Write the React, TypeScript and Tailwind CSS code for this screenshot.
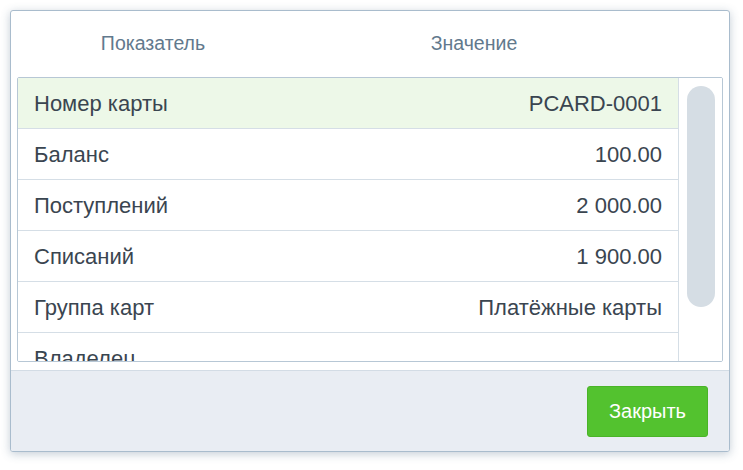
const rows = [
  { label: 'Номер карты', value: 'PCARD-0001', active: true },
  { label: 'Баланс', value: '100.00' },
  { label: 'Поступлений', value: '2 000.00' },
  { label: 'Списаний', value: '1 900.00' },
  { label: 'Группа карт', value: 'Платёжные карты' },
  { label: 'Владелец', value: '' },
];

export default function App() {
  return (
    <div className="w-[743px] h-[470px] bg-white pt-[10px] pl-[10px] font-['Liberation_Sans',Arial,sans-serif]">
      <div className="w-[720px] h-[442px] flex flex-col border border-[#a9bccd] rounded-[3px] bg-white shadow-[0_2px_10px_rgba(60,90,120,0.3)] overflow-hidden">
        {/* Header */}
        <div className="h-[66px] shrink-0 flex items-center text-[19.5px] text-[#62798d] pl-[6px]">
          <div className="w-[272px] text-center">Показатель</div>
          <div className="w-[370px] text-center">Значение</div>
        </div>

        {/* List */}
        <div className="mx-[6px] h-[285px] shrink-0 flex border border-[#b7c7d5] rounded-[2px] overflow-hidden">
          <div className="flex-1 overflow-hidden">
            {rows.map((r) => (
              <div
                key={r.label}
                className={`h-[51px] flex items-center justify-between pl-4 pr-4 border-b border-[#d5dee6] text-[22px] text-[#3a4550] ${
                  r.active ? 'bg-[#edf8e8]' : 'bg-white'
                }`}
              >
                <span>{r.label}</span>
                <span>{r.value}</span>
              </div>
            ))}
          </div>
          <div className="w-[44px] border-l border-[#d5dee6] bg-white pt-[8px] flex justify-center">
            <div className="w-[28px] h-[221px] rounded-full bg-[#d5dde4]" />
          </div>
        </div>

        {/* Footer */}
        <div className="mt-[8px] flex-1 bg-[#e9edf3] border-t border-[#d3dce5] flex items-center justify-end pr-[21px]">
          <button className="w-[121px] h-[51px] bg-[#53c22f] border border-[#4ab428] rounded-[3px] text-white text-[20px]">
            Закрыть
          </button>
        </div>
      </div>
    </div>
  );
}
